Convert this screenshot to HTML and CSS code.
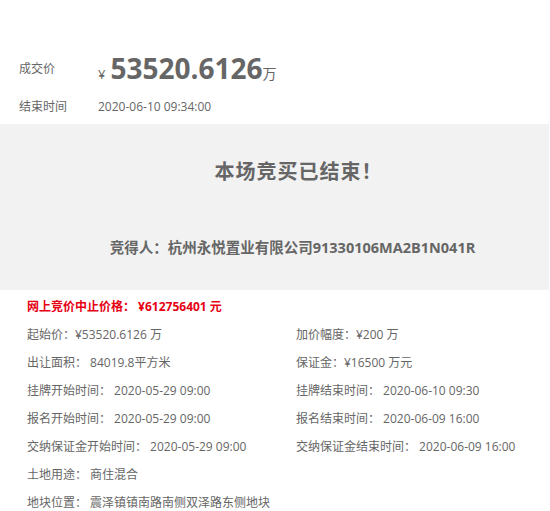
FILE: index.html
```html
<!DOCTYPE html>
<html>
<head>
<meta http-equiv="Content-Type" content="text/html; charset=utf-8"/>
<title>成交结果</title>
<link rel="stylesheet" href="styles.css">
</head>
<body>

<div class="deal">
  <div class="deal-row deal-row-price">
    <span class="deal-label">成交价</span>
    <span class="deal-value"><span class="yen">¥</span><strong class="price">53520.6126</strong><span class="unit">万</span></span>
  </div>
  <div class="deal-row">
    <span class="deal-label">结束时间</span>
    <span class="deal-value">2020-06-10 09:34:00</span>
  </div>
</div>

<div class="result">
  <h2 class="result-title">本场竞买已结束！</h2>
  <p class="result-winner">竞得人：杭州永悦置业有限公司91330106MA2B1N041R</p>
</div>

<div class="info">
  <p class="stop-price">网上竞价中止价格： ¥612756401 元</p>
  <ul class="info-grid">
    <li>起始价：¥53520.6126 万</li>
    <li>加价幅度：¥200 万</li>
    <li>出让面积： 84019.8平方米</li>
    <li>保证金：¥16500 万元</li>
    <li>挂牌开始时间： 2020-05-29 09:00</li>
    <li>挂牌结束时间： 2020-06-10 09:30</li>
    <li>报名开始时间： 2020-05-29 09:00</li>
    <li>报名结束时间： 2020-06-09 16:00</li>
    <li>交纳保证金开始时间： 2020-05-29 09:00</li>
    <li>交纳保证金结束时间： 2020-06-09 16:00</li>
    <li class="wide">土地用途： 商住混合</li>
    <li class="wide">地块位置： 震泽镇镇南路南侧双泽路东侧地块</li>
  </ul>
</div>

</body>
</html>
```

FILE: styles.css
```css
body {
  margin: 0;
  background-color: white;
  font-family: "Open Sans", "Noto Sans CJK SC", sans-serif;
  font-size: 12px;
  color: #666;
}

.deal,
.result,
.info {
  width: 549px;
}

/* top summary */
.deal {
  padding-top: 48px;
}

.deal-row {
  display: flex;
  align-items: center;
  height: 36px;
  padding-left: 19px;
}

.deal-row-price {
  height: 40px;
}

.deal-label {
  width: 79px;
}

.deal-value {
  display: flex;
  align-items: baseline;
}

.yen {
  font-size: 13px;
  margin-right: 5px;
}

.price {
  font-size: 28px;
  line-height: 30px;
}

.unit {
  font-size: 14px;
}

/* ended banner */
.result {
  background-color: #f2f2f2;
  box-sizing: border-box;
  height: 166px;
  padding: 34px 0 0 36px;
  text-align: center;
}

.result-title {
  margin: 0;
  padding-left: 12px;
  font-size: 20px;
  line-height: 28px;
  font-weight: bold;
  letter-spacing: 1px;
}

.result-winner {
  margin: 52px 0 0;
  font-size: 14.5px;
  line-height: 20px;
  font-weight: bold;
}

/* land details */
.info {
  padding: 3px 0 0 27px;
  box-sizing: border-box;
}

.stop-price {
  margin: 0;
  height: 28px;
  line-height: 28px;
  color: #e60012;
  font-weight: bold;
}

.info-grid {
  list-style: none;
  margin: 0;
  padding: 0;
  display: grid;
  grid-template-columns: 269px 1fr;
  grid-auto-rows: 28px;
}

.info-grid li {
  line-height: 28px;
  white-space: nowrap;
}

.info-grid .wide {
  grid-column: 1 / -1;
}
```
